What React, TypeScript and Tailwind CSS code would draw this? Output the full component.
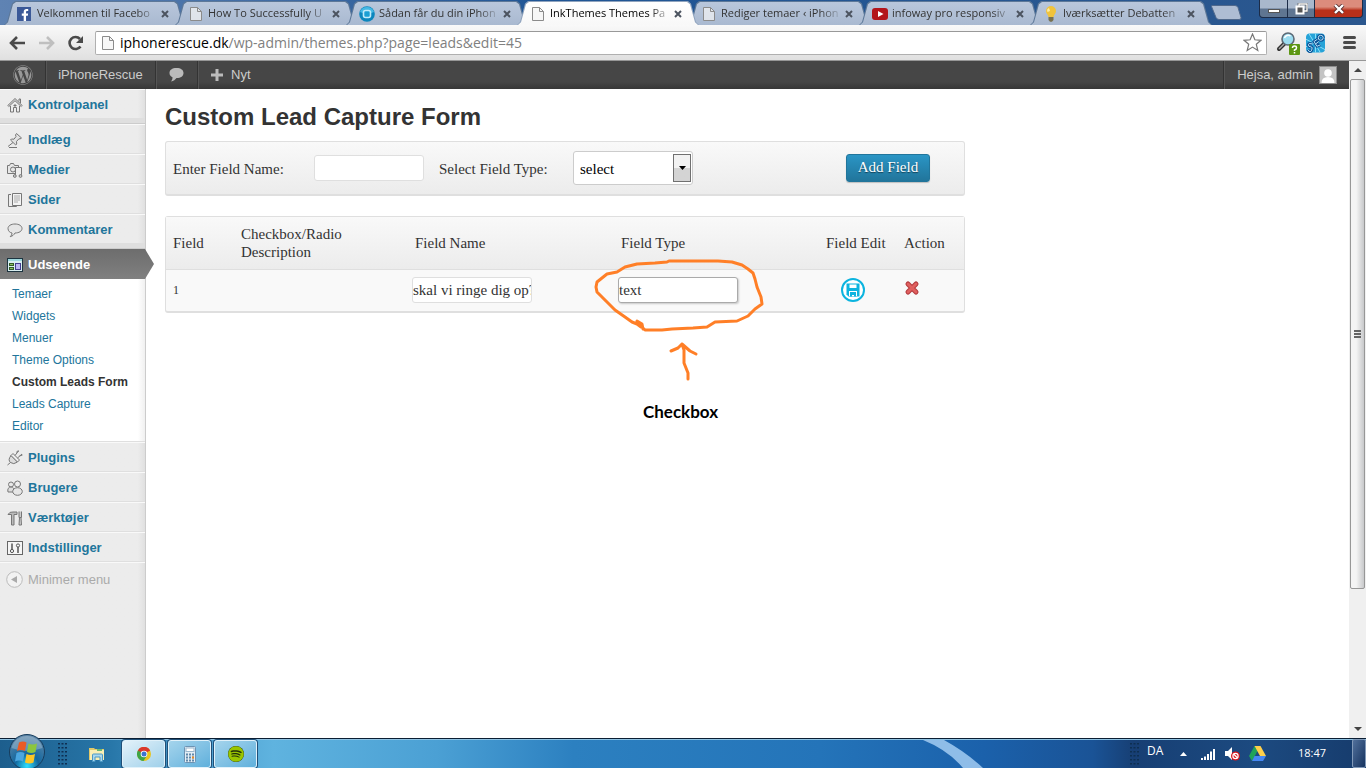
import type { ReactNode } from "react";
import { FaFacebookF, FaSpotify, FaWordpress } from "react-icons/fa";

const bar = "font-['Open_Sans','Noto_Sans',sans-serif]";

function PageIcon() {
  return (
    <svg width="16" height="16" viewBox="0 0 16 16">
      <path d="M2.5 1.5h7l4 4v9h-11z" fill="#f4f4f4" fillOpacity=".7" stroke="#8b8b8b" />
      <path d="M9.5 1.5v4h4" fill="none" stroke="#8b8b8b" />
    </svg>
  );
}

const tabs: { title: string; icon: ReactNode; active?: boolean }[] = [
  {
    title: "Velkommen til Facebo",
    icon: (
      <span className="flex h-3.5 w-3.5 items-end justify-end bg-[#3b5998] text-white">
        <FaFacebookF size={12} />
      </span>
    ),
  },
  { title: "How To Successfully U", icon: <PageIcon /> },
  {
    title: "Sådan får du din iPhon",
    icon: (
      <svg width="16" height="16" viewBox="0 0 16 16">
        <circle cx="8" cy="8" r="7.8" fill="#0c86bd" />
        <path d="M1 6a7.4 7.4 0 0 1 14 0Q8 9 1 6z" fill="#45b8e4" />
        <rect x="4.5" y="4.5" width="7" height="7" rx="2" fill="#1a9fd4" stroke="#bfeafa" strokeWidth="1.6" />
      </svg>
    ),
  },
  { title: "InkThemes Themes Pa", icon: <PageIcon />, active: true },
  { title: "Rediger temaer ‹ iPhon", icon: <PageIcon /> },
  {
    title: "infoway pro responsiv",
    icon: (
      <svg width="16" height="16" viewBox="0 0 16 16">
        <rect y="2" width="16" height="12" rx="3" fill="#b3151b" />
        <path d="M6 5l5.500 3L6 11z" fill="#fff" />
      </svg>
    ),
  },
  {
    title: "Iværksætter Debatten",
    icon: (
      <svg width="16" height="16" viewBox="0 0 16 16">
        <path d="M8 0a5 5 0 0 0-5 5c0 2.500 2 3.500 2.500 6h5C11 8.500 13 7.500 13 5a5 5 0 0 0-5-5z" fill="#f0c33c" />
        <path d="M6 2a3 3 0 0 0-1.500 4L7 5z" fill="#fdeea6" />
        <path d="M5.500 11h5v3L9 15.800H7L5.500 14z" fill="#77704f" />
      </svg>
    ),
  },
];

const tabShape = "[clip-path:polygon(0_100%,3px_88%,8px_10%,11px_0,171px_0,174px_10%,179px_88%,182px_100%)]";

function Tab({ title, icon, active }: { title: string; icon: ReactNode; active?: boolean }) {
  return (
    <button
      className={`-ml-[11px] h-6 w-[182px] shrink-0 ${tabShape} ${
        active ? "relative z-10 bg-[#8fa3bd]" : "bg-[#5d7898]"
      }`}
    >
      <span
        className={`ml-px mt-px flex h-[23px] w-[180px] items-center pl-3 text-left ${
          active ? "bg-linear-to-b from-white to-[#f8f8f8] text-black" : "bg-linear-to-b from-[#b9c7dc] to-[#a9b9d0] text-[#333]"
        } [clip-path:polygon(0_100%,3px_88%,8px_10%,11px_0,169px_0,172px_10%,177px_88%,180px_100%)]`}
      >
        <span className="flex w-5 shrink-0 items-center">{icon}</span>
        <span className="w-[124px] whitespace-nowrap text-[11px] [mask-image:linear-gradient(to_right,black_80%,transparent_98%)]">
          {title}
        </span>
        <svg width="8" height="8" viewBox="0 0 8 8" stroke="#4c5460" strokeWidth="2">
          <path d="M1 1l6 6M7 1L1 7" />
        </svg>
      </span>
    </button>
  );
}

function WindowControls() {
  return (
    <div className="mr-[3px] flex h-[18px] overflow-hidden rounded-b border border-t-0 border-[#1c2c48] bg-[#1c2c48]">
      <button aria-label="Minimer" className="flex w-[28px] items-center justify-center border-r border-[#1c2c48] bg-linear-to-b from-[#a9b8cc] from-45% to-[#5f7591] to-55%">
        <span className="mt-1 h-1 w-3 border border-[#555] bg-white"></span>
      </button>
      <button aria-label="Gendan" className="flex w-[27px] items-center justify-center border-r border-[#1c2c48] bg-linear-to-b from-[#a9b8cc] from-45% to-[#5f7591] to-55%">
        <svg width="13" height="12" viewBox="0 0 13 12" fill="none">
          <path d="M4 3V1h8v7H9" stroke="#444" strokeWidth="2.600" />
          <path d="M4 3V1h8v7H9" stroke="#fff" strokeWidth="1.400" />
          <rect x="1.500" y="3.500" width="7" height="7" fill="#555" stroke="#fff" strokeWidth="2" />
        </svg>
      </button>
      <button aria-label="Luk" className="flex w-[47px] items-center justify-center bg-linear-to-b from-[#dc8c7c] from-40% to-[#b8301a] to-60%">
        <svg width="12" height="10" viewBox="0 0 12 10">
          <path d="M2 1l8 8M10 1L2 9" stroke="#5a3030" strokeWidth="4" />
          <path d="M2 1l8 8M10 1L2 9" stroke="#fff" strokeWidth="2.400" />
        </svg>
      </button>
    </div>
  );
}

function TabStrip() {
  return (
    <div className={`${bar} flex h-[25px] items-start justify-between bg-linear-to-r from-[#5f83b3] via-[#1f5595] via-40% to-[#2b578e]`}>
      <div className="flex items-end pl-[15px] pt-px">
        {tabs.map((t) => (
          <Tab key={t.title} {...t} />
        ))}
        <button aria-label="Ny fane" className="-ml-0.5 mb-1">
          <svg width="32" height="16" viewBox="0 0 32 16">
            <path d="M1.500 1.500Q1 .5 3 .5h22q2 0 3 2l3 10q.5 2-2 2H9q-2 0-3-2z" fill="#aebdd3" stroke="#50698c" />
          </svg>
        </button>
      </div>
      <WindowControls />
    </div>
  );
}

function Toolbar() {
  return (
    <div className={`${bar} flex h-9 items-center border-b border-[#979797] bg-linear-to-b from-[#f9f9f9] to-[#e0e0e0] pl-2 pr-[5px]`}>
      <button aria-label="Tilbage" className="w-[30px]">
        <svg width="18" height="16" viewBox="0 0 18 16" fill="none" stroke="#4a4a4a" strokeWidth="2.600">
          <path d="M17 8H4M9 2L3 8l6 6" />
        </svg>
      </button>
      <button aria-label="Frem" className="w-[29px]">
        <svg width="18" height="16" viewBox="0 0 18 16" fill="none" stroke="#bfbfbf" strokeWidth="2.600">
          <path d="M1 8h13M9 2l6 6-6 6" />
        </svg>
      </button>
      <button aria-label="Genindlæs" className="w-[28px]">
        <svg width="18" height="16" viewBox="0 0 18 16">
          <path d="M13.500 11.500A6 6 0 1 1 13 4" fill="none" stroke="#4a4a4a" strokeWidth="2.600" />
          <path d="M16 1v7H9z" fill="#4a4a4a" />
        </svg>
      </button>
      <div className="flex h-6 min-w-0 flex-1 items-center rounded-xs border border-[#b0b0b0] border-t-[#999] bg-white pl-1 pr-1">
        <PageIcon />
        <p className="flex-1 whitespace-nowrap pl-1 text-[14px] leading-5 text-[#808080]">
          <span className="text-black">iphonerescue.dk</span>/wp-admin/themes.php?page=leads&amp;edit=45
        </p>
        <svg width="19" height="19" viewBox="0 0 19 19" fill="#fff" stroke="#777" strokeWidth="1.200">
          <path d="M9.500 1l2.400 5.800 6 .5-4.600 4 1.500 6.200-5.300-3.400-5.300 3.400 1.500-6.200-4.600-4 6-.5z" />
        </svg>
      </div>
      <div className="flex shrink-0 items-center gap-1.5 pl-2">
        <svg width="25" height="24" viewBox="0 0 25 24">
          <path d="M4 18l5-5" stroke="#333" strokeWidth="4" strokeLinecap="round" />
          <path d="M4 18l5-5" stroke="#aaa" strokeWidth="1.500" />
          <circle cx="13" cy="8" r="6" fill="#9bdcf0" stroke="#5d6a76" strokeWidth="1.600" />
          <path d="M9.500 7a4 4 0 0 1 6-2" fill="none" stroke="#fff" strokeWidth="1.500" />
          <rect x="14" y="13" width="11" height="11" rx="1" fill="#5c9613" />
          <path d="M17.500 17q0-2 2-2t2 1.700-2 2.300v1M19.500 21v1.500" fill="none" stroke="#fff" strokeWidth="1.500" />
        </svg>
        <svg width="19" height="20" viewBox="0 0 20 20">
          <rect width="20" height="20" rx="4" fill="#26a3d8" />
          <path d="M0 6l20 11M3 0l12 20M0 14L20 5M10 0v20" stroke="#8fe0fa" strokeWidth="1" />
          <g fill="none" stroke="#0b4f94" strokeWidth="3">
            <path d="M6.500 11q-4-1.500-4 .8t2.500 2.200 1 3.500-4-.5M12 6L8.500 8.500l3 5L15 12M10 11l3-2" />
            <circle cx="15.500" cy="4.500" r="2.600" />
          </g>
          <g fill="none" stroke="#bfeafc" strokeWidth="1">
            <path d="M6.500 11q-4-1.500-4 .8t2.500 2.200 1 3.500-4-.5M12 6L8.500 8.500l3 5L15 12M10 11l3-2" />
            <circle cx="15.500" cy="4.500" r="2.600" />
          </g>
        </svg>
        <button aria-label="Menu" className="ml-3 flex w-[18px] flex-col gap-0.5">
          <span className="h-[3px] w-[13px] rounded-full bg-[#4a4a4a]"></span>
          <span className="h-[3px] w-[13px] rounded-full bg-[#4a4a4a]"></span>
          <span className="h-[3px] w-[13px] rounded-full bg-[#4a4a4a]"></span>
        </button>
      </div>
    </div>
  );
}

function AdminBar() {
  const item = "flex h-full items-center border-r border-[#333] shadow-[1px_0_0_#555]";
  return (
    <div className="flex h-7 shrink-0 items-center bg-linear-to-b from-[#464646] from-75% to-[#373737] text-[13px] text-[#ccc]">
      <a href="#" aria-label="WordPress" className={`${item} w-[46px] justify-center text-[#999]`}>
        <FaWordpress size={20} />
      </a>
      <a href="#" className={`${item} w-[110px] justify-center`}>
        iPhoneRescue
      </a>
      <a href="#" aria-label="Kommentarer" className={`${item} w-[42px] justify-center`}>
        <svg width="15" height="14" viewBox="0 0 15 14">
          <path d="M7.500 0C3 0 .5 2 .5 5c0 2 1 3.500 3 4.300 0 2-.5 3-1.500 4.200 2.500-.5 4.500-2 5.500-3.500 4.500 0 7-2 7-5s-2.500-5-7-5z" fill="#bbb" />
        </svg>
      </a>
      <a href="#" className="flex items-center gap-2 pl-[13px]">
        <svg width="12" height="12" viewBox="0 0 12 12" stroke="#bbb" strokeWidth="3">
          <path d="M6 0v12M0 6h12" />
        </svg>
        Nyt
      </a>
      <a href="#" className="ml-auto flex h-full items-center gap-1.5 border-l border-[#555] pl-3 pr-3 shadow-[-1px_0_0_#333]">
        Hejsa, admin
        <svg width="18" height="18" viewBox="0 0 18 18">
          <rect x=".5" y=".5" width="17" height="17" fill="#c4c4c4" stroke="#8d8d8d" />
          <circle cx="9" cy="7" r="3.800" fill="#fff" />
          <path d="M2.500 17q0-6 6.500-6t6.500 6z" fill="#fff" />
        </svg>
      </a>
    </div>
  );
}

function MenuSvg({ children }: { children: ReactNode }) {
  return (
    <svg className="shrink-0" width="16" height="16" viewBox="0 0 16 16" fill="none" stroke="#777" strokeWidth="1">
      {children}
    </svg>
  );
}

const icons = {
  home: (
    <MenuSvg>
      <path d="M.8 8.500L8 1.500l7.200 7-1 1L8 3.700 1.800 9.500z" fill="#ddd" />
      <path d="M3.500 9v6h3v-4.500h3V15h3V9M12 4.500V2h1.500v4M6.500 8.500h3M8 7v4" />
    </MenuSvg>
  ),
  pin: (
    <MenuSvg>
      <path d="M9.500 1.500l5 4.500-1.500 1-1-.3-2.500 2.800.2 2.500-1 1L3.500 8l1-1 2.500.2L9 4.500l-.5-1.500z" fill="#e2e2e2" />
      <path d="M6 10.500L1 14.500M2 15.500h8" />
    </MenuSvg>
  ),
  media: (
    <MenuSvg>
      <path d="M.5 3.500h2l1-2h3l1 2h4v8H.5z" fill="#e6e6e6" />
      <circle cx="6" cy="7.500" r="2.500" />
      <path d="M8.500 13V5.500h6v8" fill="#eee" />
      <circle cx="7.800" cy="14" r="1.400" fill="#ccc" />
      <circle cx="13.500" cy="14" r="1.400" fill="#ccc" />
    </MenuSvg>
  ),
  pages: (
    <MenuSvg>
      <path d="M4 2.500H1.500v12h8V14" />
      <path d="M5.500 1.500h9v12h-9z" fill="#f3f3f3" />
      <path d="M7 4h6M7 6h6M7 8h6M7 10h4" stroke="#aaa" />
    </MenuSvg>
  ),
  comment: (
    <MenuSvg>
      <path d="M8 2C4 2 1 3.800 1 6.500S3 10.600 5 11c0 1.500-.8 2.800-1.800 3.700C5.500 14.200 7 12.800 8 11c4 0 7-1.800 7-4.500S12 2 8 2z" fill="#e6e6e6" />
    </MenuSvg>
  ),
  theme: (
    <MenuSvg>
      <rect x=".5" y="1.500" width="15" height="13" fill="#d9eef0" stroke="#1d3440" />
      <path d="M1 3h14" stroke="#9fd8dd" strokeWidth="2" />
      <rect x="2.500" y="6.500" width="4" height="2" fill="#8abf5e" stroke="#345b28" />
      <rect x="2.500" y="10.500" width="4" height="2" fill="#8abf5e" stroke="#345b28" />
      <rect x="8.500" y="6.500" width="5" height="6" fill="#bcb7f2" stroke="#433d91" />
    </MenuSvg>
  ),
  plug: (
    <MenuSvg>
      <path d="M4 5.500l6.500 6.500q-4 3-7 .5t.5-7z" fill="#ddd" />
      <path d="M6 3.500l6.500 6.500-2 2L4 5.500zM8 5.500L11.500 1M10.500 8l4.500-4M3.500 12.500L.5 15" fill="#eee" />
      <path d="M9.500 2.500l1-1.500h1.500M12.500 6l3-1" />
    </MenuSvg>
  ),
  users: (
    <MenuSvg>
      <circle cx="4" cy="4.500" r="2.500" fill="#e8e8e8" />
      <path d="M1 12c-.8-3 .5-5 3-5s3.500 2 3 5z" fill="#ddd" />
      <circle cx="10.500" cy="4" r="3" fill="#eee" />
      <ellipse cx="10.500" cy="11.500" rx="4.800" ry="3.800" fill="#e6e6e6" />
    </MenuSvg>
  ),
  tools: (
    <MenuSvg>
      <path d="M1 4.500Q2.500 1.500 6 2h4v2.500H7V15H4.500V4.500z" fill="#bbb" />
      <path d="M12 1.500v6h2.500v-6M12.500 7.500L12 15h2.500L14 7.500" fill="#ccc" />
    </MenuSvg>
  ),
  settings: (
    <MenuSvg>
      <rect x=".5" y="1.500" width="15" height="13" fill="#f5f5f5" stroke="#666" />
      <path d="M5 3.500v6M11 7v6" stroke="#555" strokeWidth="1.500" />
      <circle cx="5" cy="11" r="1.600" stroke="#555" />
      <circle cx="11" cy="5.500" r="1.600" stroke="#555" />
    </MenuSvg>
  ),
};

function MenuItem({ icon, label }: { icon: ReactNode; label: string }) {
  return (
    <a href="#" className="flex h-[30px] items-center gap-[5px] border-b border-t border-b-[#dfdfdf] border-t-[#f9f9f9] pl-[7px] pt-0.5 text-[13px] font-bold text-[#21759b]">
      {icon}
      {label}
    </a>
  );
}

const submenu = ["Temaer", "Widgets", "Menuer", "Theme Options", "Custom Leads Form", "Leads Capture", "Editor"];

function Sidebar() {
  return (
    <nav className="w-[146px] shrink-0 border-r border-[#ccc] bg-linear-to-r from-[#ececec] from-95% to-[#e0e0e0]">
      <MenuItem icon={icons.home} label="Kontrolpanel" />
      <div className="h-[5px] border-b border-[#ccc] bg-[#dfdfdf]"></div>
      <MenuItem icon={icons.pin} label="Indlæg" />
      <MenuItem icon={icons.media} label="Medier" />
      <MenuItem icon={icons.pages} label="Sider" />
      <MenuItem icon={icons.comment} label="Kommentarer" />
      <div className="h-[5px] border-b border-[#ccc] bg-[#dfdfdf]"></div>
      <a href="#" className="relative flex h-[30px] items-center gap-[5px] bg-linear-to-b from-[#6d6d6d] to-[#808080] pl-[7px] pt-0.5 text-[13px] font-bold text-white">
        {icons.theme}
        Udseende
        <span className="absolute left-full top-0 h-[30px] w-[9px] bg-linear-to-b from-[#6d6d6d] to-[#808080] [clip-path:polygon(0_0,100%_50%,0_100%)]"></span>
      </a>
      <ul className="border-b border-[#dfdfdf] bg-linear-to-r from-white from-95% to-[#f0f0f0] pb-1 pl-3 pt-1 text-xs leading-[22px] text-[#21759b]">
        {submenu.map((s) => (
          <li key={s}>
            <a href="#" className={s === "Custom Leads Form" ? "font-bold text-[#333]" : ""}>
              {s}
            </a>
          </li>
        ))}
      </ul>
      <MenuItem icon={icons.plug} label="Plugins" />
      <MenuItem icon={icons.users} label="Brugere" />
      <MenuItem icon={icons.tools} label="Værktøjer" />
      <MenuItem icon={icons.settings} label="Indstillinger" />
      <button className="flex h-[34px] w-full items-center gap-[5px] border-t border-[#f9f9f9] pl-1.5 text-[13px] text-[#aaa]">
        <svg width="17" height="17" viewBox="0 0 17 17">
          <circle cx="8.500" cy="8.500" r="7.800" fill="#f2f2f2" stroke="#bbb" />
          <path d="M5 8.500l6-3.500v7z" fill="#aaa" />
        </svg>
        Minimer menu
      </button>
    </nav>
  );
}

const panel = "w-full max-w-[800px] rounded-[3px] border border-b-2 border-[#dfdfdf]";

function AddFieldForm() {
  return (
    <form className={`${panel} flex h-[55px] items-center bg-linear-to-b from-[#f9f9f9] to-[#ececec] pl-[7px]`}>
      <label htmlFor="name" className="w-[141px] pt-0.5">
        Enter Field Name:
      </label>
      <input id="name" type="text" className="h-[26px] w-[110px] rounded-[3px] border border-[#dfdfdf] bg-white" />
      <label htmlFor="type" className="ml-[15px] w-[134px] pt-0.5">
        Select Field Type:
      </label>
      <div className="relative">
        <select id="type" className="h-[34px] w-[120px] appearance-none rounded-[3px] border border-[#ccc] bg-white pl-1.5 pt-0.5 text-black">
          <option>select</option>
        </select>
        <span className="pointer-events-none absolute right-[2px] top-[3px] flex h-7 w-[18px] items-center justify-center border border-[#707070] bg-linear-to-b from-[#f2f2f2] from-50% to-[#d4d4d4] to-50%">
          <svg width="7" height="4" viewBox="0 0 7 4">
            <path d="M0 0h7L3.500 4z" fill="#000" />
          </svg>
        </span>
      </div>
      <button
        type="button"
        className="ml-auto mr-[34px] h-7 w-[84px] rounded-[3px] border border-[#21759b] bg-linear-to-b from-[#2a95c5] to-[#21759b] pb-0.5 text-white shadow-[0_1px_1px_rgba(0,0,0,0.2)] text-shadow-[0_1px_1px_rgba(0,0,0,0.5)]"
      >
        Add Field
      </button>
    </form>
  );
}

// hand drawn note around the field type
function Annotation() {
  return (
    <div className="pointer-events-none absolute left-[429px] top-[43px] w-[170px]">
      <svg
        className="overflow-visible"
        width="170"
        height="124"
        viewBox="0 0 170 124"
        fill="none"
        stroke="#ff7f27"
        strokeWidth="3"
        strokeLinecap="round"
        strokeLinejoin="round"
      >
        <path d="M42 61L47 64 48 69M46 67L42 64 37 62 30 57 20 50 12 42 2 32 1 27 2 22 12 14 22 12 30 7 42 4 60 3 72 2 74 1H123L137 2 147 5 153 9 158 13 160 19 162 27 166 37 167 44 160 49 153 56 142 61 120 62 112 67 98 68 77 69 67 70 50 70 46 66" />
        <path d="M93 119V113L89 103V90L87 84M76 91L83 88 87 84 95 91 101 94" />
      </svg>
      <p className="pl-12 pt-4 font-['Lato',sans-serif] text-[17px] font-bold leading-6 text-black">Checkbox</p>
    </div>
  );
}

function FieldTable() {
  return (
    <div className={`${panel} relative bg-[#f9f9f9]`}>
      <table className="w-full table-fixed text-left">
        <colgroup>
          <col className="w-[68px]" />
          <col className="w-[174px]" />
          <col className="w-[206px]" />
          <col className="w-[205px]" />
          <col className="w-[78px]" />
          <col />
        </colgroup>
        <thead className="bg-linear-to-b from-[#f9f9f9] to-[#ececec]">
          <tr className="h-[52px] border-b border-[#dfdfdf] leading-[18px] *:pl-[7px] *:font-normal">
            <th>Field</th>
            <th>
              Checkbox/Radio
              <br />
              Description
            </th>
            <th>Field Name</th>
            <th>Field Type</th>
            <th className="whitespace-nowrap">Field Edit</th>
            <th>Action</th>
          </tr>
        </thead>
        <tbody>
          <tr className="h-[42px]">
            <td className="pl-[7px] text-xs">1</td>
            <td></td>
            <td className="pl-1">
              <input
                type="text"
                aria-label="Field Name"
                defaultValue="skal vi ringe dig op?"
                className="block h-[26px] w-[120px] rounded-[3px] border border-[#dfdfdf] bg-white"
              />
            </td>
            <td className="pl-1">
              <input
                type="text"
                aria-label="Field Type"
                defaultValue="text"
                className="block h-[26px] w-[120px] rounded-[3px] border border-[#aaa] bg-white shadow-[1px_1px_2px_rgba(0,0,0,0.2)]"
              />
            </td>
            <td className="pl-[22px]">
              <button aria-label="Save" className="block">
                <svg width="24" height="24" viewBox="0 0 24 24">
                  <circle cx="12" cy="12" r="11" fill="#fff" stroke="#0cb4df" strokeWidth="2" />
                  <path d="M5.500 5.500h13v13h-11l-2-2z" fill="#0cb4df" />
                  <path d="M8.500 6.500h7V10h-7zM8 13h8v5H8z" fill="#fff" />
                  <path d="M9 14h6v4.500h-2V17h-2v1.500H9z" fill="#0cb4df" />
                </svg>
              </button>
            </td>
            <td className="pl-[7px]">
              <button aria-label="Delete" className="mb-1 block">
                <svg width="16" height="16" viewBox="0 0 16 16" strokeLinecap="round">
                  <path d="M4 4l8 8M12 4l-8 8" stroke="#b23a3d" strokeWidth="5" />
                  <path d="M4 4l8 8M12 4l-8 8" stroke="#e0605f" strokeWidth="3" />
                </svg>
              </button>
            </td>
          </tr>
        </tbody>
      </table>
      <Annotation />
    </div>
  );
}

function Scrollbar() {
  return (
    <div className="flex w-[17px] shrink-0 flex-col items-center bg-[#f0f0f0]">
      <svg className="my-[5px] shrink-0" width="8" height="8" viewBox="0 0 8 8">
        <path d="M4 2l4 4H0z" fill="#444" />
      </svg>
      <div className="flex w-[15px] basis-[510px] flex-col items-center justify-center gap-px rounded-xs border border-[#979797] bg-linear-to-r from-[#f4f4f4] from-40% to-[#c8c9cb]">
        <span className="h-0.5 w-[7px] bg-[#666]"></span>
        <span className="h-0.5 w-[7px] bg-[#666]"></span>
        <span className="h-0.5 w-[7px] bg-[#666]"></span>
      </div>
      <svg className="mb-[5px] mt-auto shrink-0" width="8" height="8" viewBox="0 0 8 8">
        <path d="M4 6L0 2h8z" fill="#444" />
      </svg>
    </div>
  );
}

function Grip() {
  return (
    <svg width="9" height="22" viewBox="0 0 9 22" stroke="#0e2f52" strokeWidth="2" strokeDasharray="1.500 2.500">
      <path d="M1 0v22M4.500 0v22M8 0v22" />
    </svg>
  );
}

function Taskbar() {
  const task =
    "flex w-[43px] items-center justify-center rounded-[3px] border border-[#e0f1fa] bg-linear-to-br shadow-[0_0_0_1px_#1f4f78]";
  return (
    <footer className={`${bar} relative flex h-[30px] shrink-0 items-center border-t border-[#0b1e33] bg-[#8fc3e3]`}>
      <div className="absolute inset-x-0 bottom-0 top-px bg-[linear-gradient(90deg,#1d5e8d_0,#2776a8_8%,#4d9fd0_15%,#5fb3df_20%,#4ba0d4_32%,#2c80c0_42%,#2474b9_60%,#1b61ab_72%,#1a5396_80%,#173f74_83%,#1c4a80_92%,#163b6c_100%)]"></div>
      <svg className="absolute left-[920px] top-px" width="70" height="28" viewBox="0 0 70 28">
        <path d="M3 0h21q22 12 39 28H43Q28 10 3 0z" fill="#a3cdf2" fillOpacity=".85" />
      </svg>
      <button aria-label="Start" className="absolute -top-[5px] left-2">
        <svg width="38" height="35" viewBox="0 0 38 35">
          <defs>
            <radialGradient id="orb" cx="50%" cy="90%" r="85%">
              <stop offset="0" stopColor="#2ee0ff" />
              <stop offset=".4" stopColor="#12679f" />
              <stop offset="1" stopColor="#5c86a8" />
            </radialGradient>
          </defs>
          <circle cx="19" cy="18" r="17.500" fill="url(#orb)" stroke="#173c5c" />
          <path d="M3.500 14a16 16 0 0 1 31 0Q19 20 3.500 14z" fill="#fff" fillOpacity=".25" />
          <path d="M11 8.500q4-2 7.500 0L17 17q-4-2-8 0z" fill="#ea5b25" />
          <path d="M20.500 9.500q4 2 8.500 0L27.500 18q-4 2-8.500 0z" fill="#8cc63e" />
          <path d="M8.500 19q4-2 8 0L15 27.500q-4-2-8 0z" fill="#4ba6e0" />
          <path d="M18.500 20q4 2 8.500 0l-1.500 8.500q-4 2-8.500 0z" fill="#fcc626" />
        </svg>
      </button>
      <div className="relative ml-[58px] flex h-full flex-1 items-center">
        <Grip />
        <button aria-label="Stifinder" className="ml-[21px]">
          <svg width="18" height="16" viewBox="0 0 18 16">
            <path d="M1 2h5l1 1h9v11H1z" fill="#e3c868" />
            <path d="M2 4h14v10H2z" fill="#f9efb5" />
            <path d="M9 3h5v2H9z" fill="#68b978" />
            <path d="M4.500 15.500V9q0-1 1-1h8q1 0 1 1v6.500H12V11H7v4.500z" fill="#a8d8ef" stroke="#4c98c4" />
          </svg>
        </button>
        <div className="ml-4 mt-px flex h-[28px] gap-[3px]">
          <button aria-label="Chrome" className={`${task} from-[#e3f2fa] to-[#9fd0ea]`}>
            <svg width="14" height="14" viewBox="0 0 14 14">
              <circle cx="7" cy="7" r="7" fill="#e8c31f" />
              <path d="M7 7L.9 3.500A7 7 0 0 1 13.100 3.500z" fill="#d9382c" />
              <path d="M7 3.500h6.100A7 7 0 0 0 .9 3.500L4 8.500z" fill="#d9382c" />
              <path d="M.9 3.500A7 7 0 0 0 6.500 14l3.200-5L7 7z" fill="#3da447" />
              <circle cx="7" cy="7" r="3.300" fill="#fff" />
              <circle cx="7" cy="7" r="2.500" fill="#3a73d0" />
            </svg>
          </button>
          <button aria-label="Lommeregner" className={`${task} from-[#a4d4ec] to-[#5fb0dc]`}>
            <svg width="12" height="17" viewBox="0 0 12 17">
              <rect x=".5" y=".5" width="11" height="16" rx="1" fill="#e4eef6" stroke="#6d93b3" />
              <rect x="2" y="2" width="8" height="3.500" fill="#fff" stroke="#9ab7cd" />
              <path d="M2 8.500h8M2 11.500h8M2 14.500h8" stroke="#5f88aa" strokeWidth="2" strokeDasharray="2 1" />
              <path d="M8 11.500h2" stroke="#ee8a20" strokeWidth="2" />
            </svg>
          </button>
          <button aria-label="Spotify" className={`${task} from-[#a4d4ec] to-[#5fb0dc]`}>
            <span className="rounded-full bg-[#22300a] text-[#9ac600]">
              <FaSpotify size={16} />
            </span>
          </button>
        </div>
        <div className="ml-auto flex h-full items-center text-xs text-white">
          <Grip />
          <span className="mb-1.5 ml-2 w-[33px]">DA</span>
          <svg width="7" height="4" viewBox="0 0 7 4">
            <path d="M3.500 0L7 4H0z" fill="#fff" />
          </svg>
          <svg className="ml-3.5" width="15" height="12" viewBox="0 0 15 12" fill="#fff">
            <path d="M0 10h2v2H0zM3 8.500h2V12H3zM6 6h2v6H6zM9 3.500h2V12H9zM12 1h2v11h-2z" />
          </svg>
          <svg className="ml-2" width="17" height="15" viewBox="0 0 17 15">
            <path d="M1 5h3l4-4v13l-4-4H1z" fill="#fff" />
            <circle cx="11.500" cy="10" r="4.500" fill="#d8141c" />
            <circle cx="11.500" cy="10" r="2.600" fill="none" stroke="#fff" strokeWidth="1.200" />
            <path d="M9.800 8.200l3.600 3.600" stroke="#fff" strokeWidth="1.300" />
          </svg>
          <svg className="ml-2" width="17" height="15" viewBox="0 0 17 15">
            <path d="M5.500 0L0 10l3 5 5.500-10z" fill="#20a35a" />
            <path d="M5.500 0h6L17 10h-6z" fill="#ffd04b" />
            <path d="M5.500 10H17l-3 5H3z" fill="#4688f4" />
          </svg>
          <time className="ml-8 w-[54px] text-[11px]">18:47</time>
          <button aria-label="Vis skrivebord" className="h-full w-3.5 rounded-xs border border-[#8199b8] bg-linear-to-br from-[#51709b] to-[#16335f]"></button>
        </div>
      </div>
    </footer>
  );
}

export default function App() {
  return (
    <div className="flex h-screen flex-col overflow-hidden bg-white font-['Liberation_Sans',Arial,sans-serif]">
      <TabStrip />
      <Toolbar />
      <div className="flex min-h-0 flex-1">
        <div className="flex min-w-0 flex-1 flex-col">
          <AdminBar />
          <div className="flex min-h-0 flex-1">
            <Sidebar />
            <main className="min-w-0 flex-1 pl-[19px] pr-5 font-['Liberation_Serif',Georgia,serif] text-[15px] text-[#333]">
              <h1 className="pb-2 pt-3 font-['Liberation_Sans',Arial,sans-serif] text-2xl font-bold">Custom Lead Capture Form</h1>
              <AddFieldForm />
              <div className="h-5"></div>
              <FieldTable />
            </main>
          </div>
        </div>
        <Scrollbar />
      </div>
      <Taskbar />
    </div>
  );
}
